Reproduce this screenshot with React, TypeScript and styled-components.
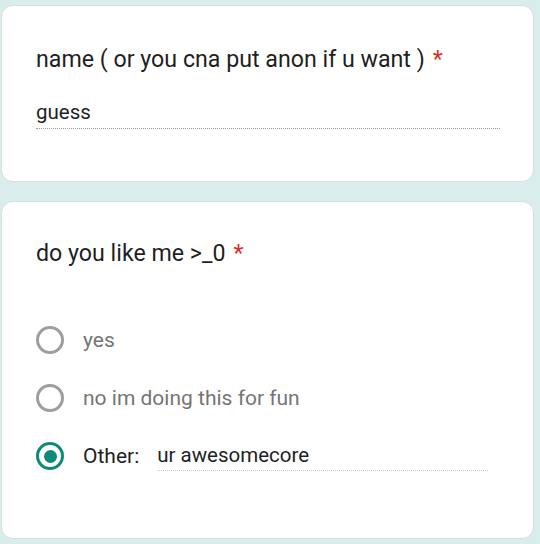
import React from "react";
import styled, { createGlobalStyle } from "styled-components";

const Global = createGlobalStyle`
  html, body { margin: 0; padding: 0; background: #d9eeec; }
  body { font-family: Roboto, "Noto Sans", Arial, sans-serif; }
`;

const Page = styled.div`
  width: 540px;
  height: 544px;
  box-sizing: border-box;
  padding: 5px 6px 0 1px;
  display: flex;
  flex-direction: column;
  gap: 19px;
  background: #d9eeec;
`;

const Card = styled.div<{ $h: number }>`
  height: ${(p) => p.$h}px;
  box-sizing: border-box;
  background: #ffffff;
  border-radius: 12px;
  border: 1px solid #dcdcdc;
  padding: 0 0 0 34px;
  display: flex;
  flex-direction: column;
`;

const Title = styled.div<{ $top: number }>`
  margin-top: ${(p) => p.$top}px;
  font-size: 23.2px;
  line-height: 30px;
  color: #1f1f1f;
`;

const Star = styled.span`
  color: #d93025;
  margin-left: 8px;
`;

const Answer = styled.div<{ $w: number }>`
  margin-top: 26px;
  width: ${(p) => p.$w}px;
  font-size: 20.5px;
  line-height: 24px;
  color: #1f1f1f;
  padding-bottom: 4px;
  border-bottom: 1px dotted #9a9a9a;
`;

const Options = styled.div`
  margin-top: 58px;
  display: flex;
  flex-direction: column;
  gap: 30px;
`;

const Option = styled.div`
  display: flex;
  align-items: center;
  height: 28px;
`;

const Radio = styled.span<{ $on?: boolean }>`
  width: 28px;
  height: 28px;
  box-sizing: border-box;
  border-radius: 50%;
  border: 3px solid ${(p) => (p.$on ? "#0f8a7a" : "#9e9e9e")};
  display: flex;
  align-items: center;
  justify-content: center;
  flex: none;
  &::after {
    content: "";
    display: ${(p) => (p.$on ? "block" : "none")};
    width: 13px;
    height: 13px;
    border-radius: 50%;
    background: #0f8a7a;
  }
`;

const Label = styled.span<{ $dark?: boolean }>`
  margin-left: 19px;
  font-size: 21px;
  color: ${(p) => (p.$dark ? "#1f1f1f" : "#757575")};
`;

const OtherInput = styled.div`
  align-self: flex-start;
  margin-left: 18px;
  width: 331px;
  font-size: 20.5px;
  line-height: 26px;
  padding-bottom: 2px;
  color: #1f1f1f;
  border-bottom: 1px dotted #c8c8c8;
`;

export default function App() {
  return (
    <>
      <Global />
      <Page>
        <Card $h={177}>
          <Title $top={38}>
            name ( or you cna put anon if u want )<Star>*</Star>
          </Title>
          <Answer $w={464}>guess</Answer>
        </Card>
        <Card $h={338}>
          <Title $top={36}>
            do you like me &gt;_0<Star>*</Star>
          </Title>
          <Options>
            <Option>
              <Radio />
              <Label>yes</Label>
            </Option>
            <Option>
              <Radio />
              <Label>no im doing this for fun</Label>
            </Option>
            <Option>
              <Radio $on />
              <Label $dark>Other:</Label>
              <OtherInput>ur awesomecore</OtherInput>
            </Option>
          </Options>
        </Card>
      </Page>
    </>
  );
}
